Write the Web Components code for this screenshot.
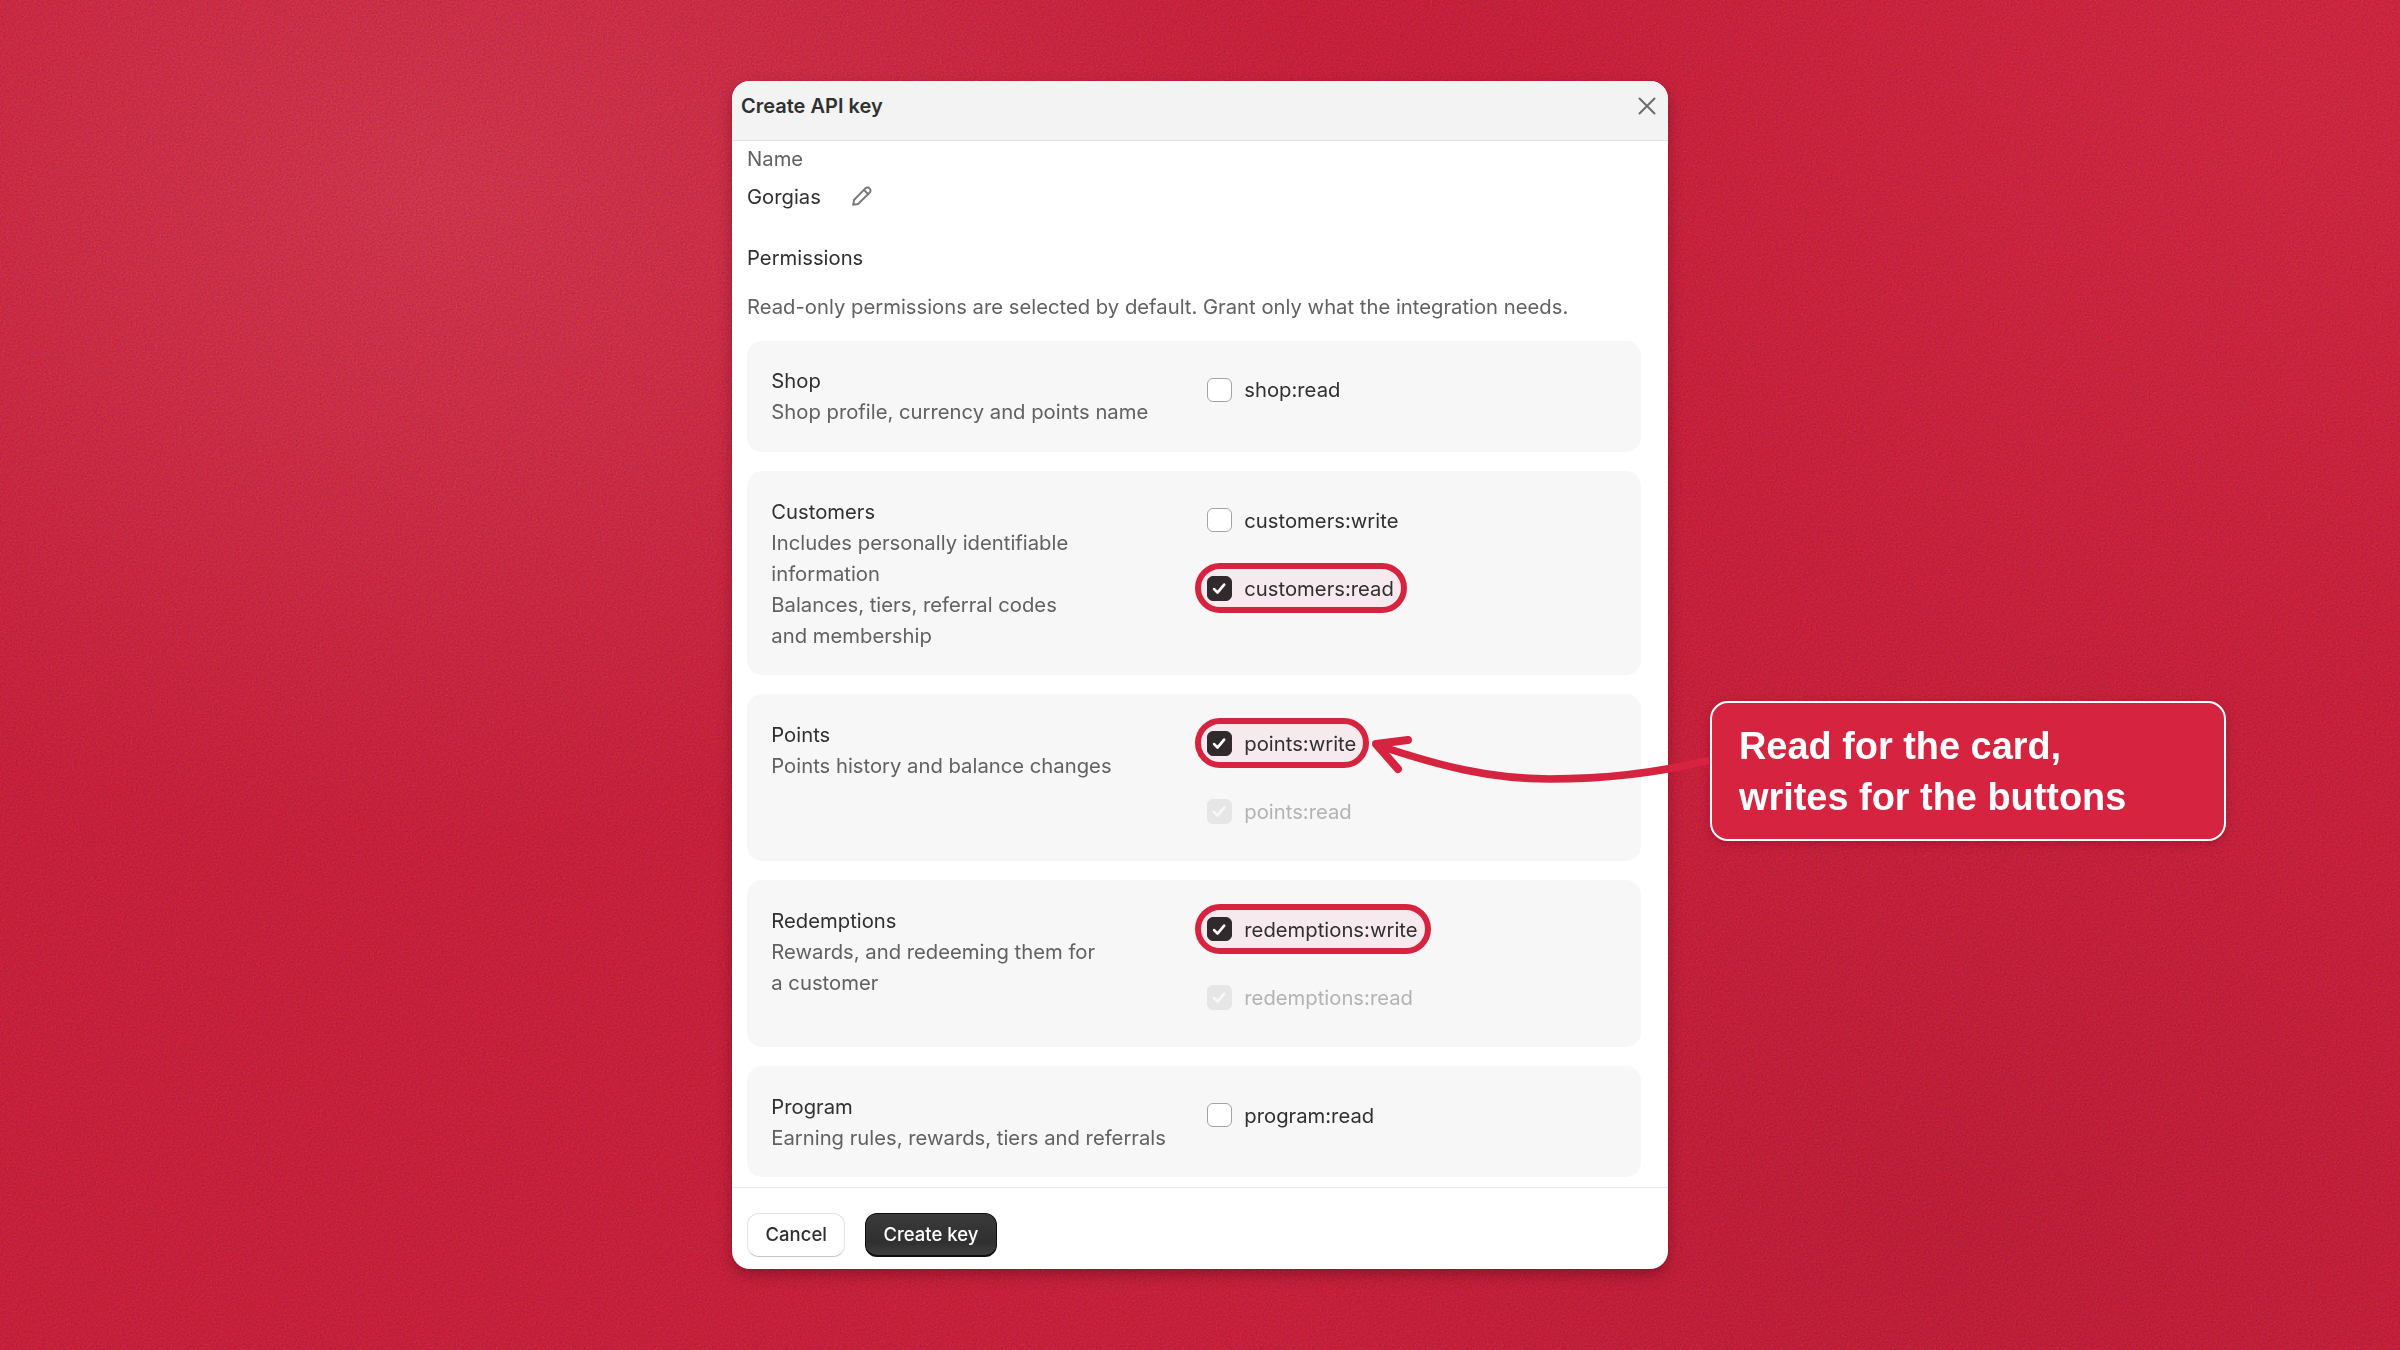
<!DOCTYPE html>
<html>
<head>
<meta charset="utf-8">
<title>Create API key</title>
<style>
  html, body { margin: 0; padding: 0; }
  body { font-family: Inter, "Liberation Sans", sans-serif; }
</style>
</head>
<body>
<key-page>
  <key-dialog heading="Create API key">
    <key-name label="Name" value="Gorgias"></key-name>
    <perm-intro title-text="Permissions">Read-only permissions are selected by default. Grant only what the integration needs.</perm-intro>
    <perm-card>
      <span slot="title">Shop</span>
      <span slot="desc">Shop profile, currency and points name</span>
      <perm-check>shop:read</perm-check>
    </perm-card>
    <perm-card>
      <span slot="title">Customers</span>
      <span slot="desc">Includes personally identifiable<br>information<br>Balances, tiers, referral codes<br>and membership</span>
      <perm-check>customers:write</perm-check>
      <perm-check state="on" mark>customers:read</perm-check>
    </perm-card>
    <perm-card>
      <span slot="title">Points</span>
      <span slot="desc">Points history and balance changes</span>
      <perm-check state="on" mark>points:write</perm-check>
      <perm-check state="locked">points:read</perm-check>
    </perm-card>
    <perm-card>
      <span slot="title">Redemptions</span>
      <span slot="desc">Rewards, and redeeming them for<br>a customer</span>
      <perm-check state="on" mark>redemptions:write</perm-check>
      <perm-check state="locked">redemptions:read</perm-check>
    </perm-card>
    <perm-card>
      <span slot="title">Program</span>
      <span slot="desc">Earning rules, rewards, tiers and referrals</span>
      <perm-check>program:read</perm-check>
    </perm-card>
    <key-button slot="footer">Cancel</key-button>
    <key-button slot="footer" primary>Create key</key-button>
  </key-dialog>
  <call-out>Read for the card,<br>writes for the buttons</call-out>
</key-page>

<script>
class KeyPage extends HTMLElement {
  constructor() {
    super();
    this.attachShadow({mode: "open"}).innerHTML = `
      <style>
        :host {
          display: flex;
          align-items: center;
          justify-content: center;
          position: relative;
          width: 2400px;
          height: 1350px;
          overflow: hidden;
          background:
            radial-gradient(ellipse 900px 650px at 430px 190px, rgba(212,72,92,.5), rgba(212,72,92,0) 100%),
            radial-gradient(ellipse 800px 600px at 2300px 100px, rgba(212,48,72,.42), rgba(212,48,72,0) 100%),
            radial-gradient(ellipse 700px 450px at 1950px 1230px, rgba(150,18,40,.2), rgba(150,18,40,0) 100%),
            #c4203b;
        }
        .grain { position: absolute; left: 0; top: 0; width: 2400px; height: 1350px; opacity: .3; mix-blend-mode: overlay; }
        .arrow { position: absolute; left: 1360px; top: 730px; width: 360px; height: 60px; overflow: visible; }
        ::slotted(key-dialog) { position: relative; }
      </style>
      <svg class="grain" aria-hidden="true">
        <filter id="n" color-interpolation-filters="sRGB"><feTurbulence type="fractalNoise" baseFrequency="0.55" numOctaves="2" stitchTiles="stitch"/><feColorMatrix values="1.6 0 0 0 -.3  0 1.6 0 0 -.3  0 0 1.6 0 -.3  0 0 0 0 1"/></filter>
        <rect width="2400" height="1350" filter="url(#n)"/>
      </svg>
      <slot></slot>
      <svg class="arrow" viewBox="1360 730 360 60" fill="none" stroke="#d6233f" stroke-linecap="round" stroke-linejoin="round" aria-hidden="true">
        <path d="M1380 746 C1440 766 1490 779 1550 779 C1610 779 1660 772 1706 761" stroke-width="7.5"/>
        <path d="M1408 740 L1376 744 L1398 769" stroke-width="8"/>
      </svg>
    `;
  }
}
customElements.define("key-page", KeyPage);

class KeyDialog extends HTMLElement {
  constructor() {
    super();
    this.attachShadow({mode: "open"}).innerHTML = `
      <style>
        :host {
          display: block;
          width: 936px;
          background: #fff;
          border-radius: 18px;
          overflow: hidden;
          box-shadow: 0 6px 14px rgba(70, 0, 15, .38);
          color: #303030;
          font: 400 20.25px/31px Inter, "Liberation Sans", sans-serif;
        }
        header {
          display: flex;
          align-items: center;
          justify-content: space-between;
          height: 60px;
          padding: 0 11px 9px 9px;
          box-sizing: border-box;
          background: #f3f3f3;
          border-bottom: 1.5px solid #e0e0e0;
          font-size: 20px;
          font-weight: 600;
        }
        header svg { width: 20px; height: 20px; display: block; }
        main { padding: 1.5px 27px 0 15px; display: flex; flex-direction: column; gap: 19px; }
        footer {
          display: flex;
          gap: 19.5px;
          margin-top: 10.3px;
          padding: 24.5px 15px 12px;
          border-top: 1.5px solid #e8e8e8;
        }
      </style>
      <header>
        <span class="title"></span>
        <svg viewBox="0 0 20 20" fill="none" stroke="#6b6b6b" stroke-width="2" stroke-linecap="round"><path d="M2.5 2.5 17.5 17.5M17.5 2.5 2.5 17.5"/></svg>
      </header>
      <main><slot></slot></main>
      <footer><slot name="footer"></slot></footer>
    `;
    this.shadowRoot.querySelector(".title").textContent = this.getAttribute("heading");
  }
}
customElements.define("key-dialog", KeyDialog);

class KeyName extends HTMLElement {
  constructor() {
    super();
    this.attachShadow({mode: "open"}).innerHTML = `
      <style>
        :host { display: block; }
        .label { color: #616161; height: 31px; }
        .row { display: flex; align-items: center; gap: 30px; margin-top: 7px; height: 31px; }
        svg { width: 22px; height: 22px; display: block; }
      </style>
      <div class="label"></div>
      <div class="row">
        <span class="value"></span>
        <svg viewBox="0 0 22 22" fill="none" stroke="#7a7a7a" stroke-width="2" stroke-linejoin="round" stroke-linecap="round">
          <path d="M2.2 19.8 3 15 14.3 3.4a3 3 0 0 1 4.3 0a3 3 0 0 1 0 4.3L7 19Z"/>
          <path d="M13 5 17 9"/>
        </svg>
      </div>
    `;
    this.shadowRoot.querySelector(".label").textContent = this.getAttribute("label");
    this.shadowRoot.querySelector(".value").textContent = this.getAttribute("value");
  }
}
customElements.define("key-name", KeyName);

class PermIntro extends HTMLElement {
  constructor() {
    super();
    this.attachShadow({mode: "open"}).innerHTML = `
      <style>
        :host { display: block; margin-top: 11px; }
        .t { height: 31px; }
        .d { color: #616161; margin-top: 18px; white-space: nowrap; }
      </style>
      <div class="t"></div>
      <div class="d"><slot></slot></div>
    `;
    this.shadowRoot.querySelector(".t").textContent = this.getAttribute("title-text");
  }
}
customElements.define("perm-intro", PermIntro);

class PermCard extends HTMLElement {
  constructor() {
    super();
    this.attachShadow({mode: "open"}).innerHTML = `
      <style>
        :host {
          display: grid;
          grid-template-columns: 424px 1fr;
          padding: 24.3px;
          background: #f7f7f7;
          border-radius: 15px;
        }
        .left { white-space: nowrap; padding-top: .6px; }
        .desc { color: #616161; }
        .right { display: flex; flex-direction: column; gap: 18.4px; align-items: flex-start; }
      </style>
      <div class="left">
        <div><slot name="title"></slot></div>
        <div class="desc"><slot name="desc"></slot></div>
      </div>
      <div class="right"><slot></slot></div>
    `;
  }
}
customElements.define("perm-card", PermCard);

class PermCheck extends HTMLElement {
  constructor() {
    super();
    this.attachShadow({mode: "open"}).innerHTML = `
      <style>
        :host {
          display: inline-flex;
          align-items: center;
          height: 50px;
          box-sizing: border-box;
          border: 6px solid transparent;
          border-radius: 25px;
          padding: 0 7px 0 6px;
          gap: 12.5px;
          white-space: nowrap;
        }
        :host([mark]) { border-color: #d6233f; background: #f6eaee; }
        .box {
          width: 24.5px;
          height: 24.5px;
          box-sizing: border-box;
          border-radius: 6px;
          background: #fff;
          border: 1.5px solid #a3a3a3;
          display: block;
          flex: none;
        }
        :host([state="on"]) .box { background: #302a2d; border-color: #302a2d; }
        :host([state="locked"]) .box { background: #e6e6e6; border-color: #e6e6e6; }
        :host([state="locked"]) { color: #b3b3b3; }
        svg { display: none; width: 100%; height: 100%; }
        :host([state="on"]) svg, :host([state="locked"]) svg { display: block; }
        :host([state="locked"]) svg { opacity: .75; }
      </style>
      <span class="box">
        <svg viewBox="0 0 22 22" fill="none" stroke="#fff" stroke-width="2.6" stroke-linecap="round" stroke-linejoin="round"><path d="M6 11.8 9.3 15.2 15.8 7.4"/></svg>
      </span>
      <span><slot></slot></span>
    `;
  }
}
customElements.define("perm-check", PermCheck);

class KeyButton extends HTMLElement {
  constructor() {
    super();
    this.attachShadow({mode: "open"}).innerHTML = `
      <style>
        :host {
          display: inline-flex;
          align-items: center;
          justify-content: center;
          height: 44px;
          box-sizing: border-box;
          padding: 0 17.5px;
          border-radius: 12px;
          background: #fff;
          color: #303030;
          border: 1.5px solid #e3e3e3;
          border-bottom-color: #c4c4c4;
          font-size: 18.5px;
          font-weight: 500;
          white-space: nowrap;
        }
        :host([primary]) {
          color: #fff;
          background: linear-gradient(#3a3a3a, #303030 70%, #404040);
          border: 1.5px solid #0f0f0f;
          border-bottom-width: 2.5px;
        }
      </style>
      <slot></slot>
    `;
  }
}
customElements.define("key-button", KeyButton);

class CallOut extends HTMLElement {
  constructor() {
    super();
    this.attachShadow({mode: "open"}).innerHTML = `
      <style>
        :host {
          position: absolute;
          left: 1710px;
          top: 701px;
          width: 516px;
          height: 140px;
          box-sizing: border-box;
          padding: 17.5px 0 0 27px;
          background: #d6233f;
          border: 2.5px solid #fff;
          border-radius: 18px;
          box-shadow: 0 3px 10px rgba(80, 0, 20, .25);
          color: #fff;
          font: 700 37.9px/51px "Liberation Sans", Arial, sans-serif;
          white-space: nowrap;
        }
      </style>
      <slot></slot>
    `;
  }
}
customElements.define("call-out", CallOut);
</script>
</body>
</html>
